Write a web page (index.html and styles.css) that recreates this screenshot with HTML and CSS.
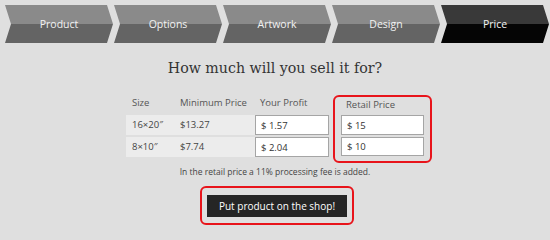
FILE: index.html
```html
<!DOCTYPE html>
<html lang="en">
<head>
  <meta charset="UTF-8">
  <title>Price</title>
  <link rel="stylesheet" href="styles.css">
</head>
<body>

  <div class="steps">
    <div class="step">Product</div>
    <div class="step">Options</div>
    <div class="step">Artwork</div>
    <div class="step">Design</div>
    <div class="step active">Price</div>
  </div>

  <h1>How much will you sell it for?</h1>

  <div class="pricing">
    <div class="table">
      <div class="head">Size</div>
      <div class="head">Minimum Price</div>
      <div class="head">Your Profit</div>

      <div class="cell size">16×20″</div>
      <div class="cell">$13.27</div>
      <div class="field"><input type="text" value="$ 1.57"></div>

      <div class="cell size">8×10″</div>
      <div class="cell">$7.74</div>
      <div class="field"><input type="text" value="$ 2.04"></div>
    </div>

    <div class="retail">
      <div class="head">Retail Price</div>
      <div class="field"><input type="text" value="$ 15"></div>
      <div class="field"><input type="text" value="$ 10"></div>
    </div>
  </div>

  <p class="note">In the retail price a 11% processing fee is added.</p>

  <div class="submit">
    <div class="outline">
      <button>Put product on the shop!</button>
    </div>
  </div>

</body>
</html>
```

FILE: styles.css
```css
body {
  margin: 0;
  background-color: #dfdfdf;
  color: #444;
  font-family: 'Open Sans', sans-serif;
}

.steps {
  display: flex;
  gap: 1px;
  padding: 5px 0 0 5px;
}

.step {
  flex: none;
  width: 108px;
  height: 38px;
  display: flex;
  align-items: center;
  justify-content: center;
  font-size: 10.5px;
  color: #f2f2f2;
  background: linear-gradient(#8a8a8a 50%, #646464 50%);
  clip-path: polygon(0 0, 102px 0, 108px 50%, 102px 100%, 0 100%, 6px 50%);
}

.step.active {
  background: linear-gradient(#393939 50%, #050505 50%);
}

h1 {
  margin: 15px 0 0;
  font: normal 14.2px/20px 'DejaVu Serif', serif;
  color: #333;
  text-align: center;
}

.pricing {
  display: flex;
  align-items: flex-start;
  margin: 15px 0 0 126px;
  font-size: 9.5px;
}

.table {
  display: grid;
  grid-template-columns: 49px 80px 74px;
  grid-auto-rows: 20px;
  row-gap: 2px;
}

.head {
  line-height: 20px;
  padding-left: 5px;
  color: #555;
}

.cell {
  line-height: 20px;
  padding-left: 5px;
  background-color: #ececec;
}

.cell.size,
.table .head:first-child {
  padding-left: 6px;
}

.field input {
  box-sizing: border-box;
  width: 100%;
  height: 100%;
  margin: 0;
  padding: 0 5px;
  border: 1px solid #a5a5a5;
  background: #fff;
  color: #333;
  font: 9.5px 'Open Sans', sans-serif;
}

.retail {
  display: grid;
  grid-template-columns: 83px;
  grid-template-rows: 16px 20px 19px;
  row-gap: 2px;
  margin: 2px 0 0 4px;
  padding: 0 6px 5px;
  border: 2px solid #e8141b;
  border-radius: 6px;
}

.retail .head {
  line-height: 16px;
}

.note {
  margin: 2px 0 0;
  font-size: 8.5px;
  line-height: 14px;
  text-align: center;
}

.submit {
  margin-top: 7px;
  padding-left: 4px;
  text-align: center;
}

.outline {
  display: inline-block;
  padding: 7px 5px 6px;
  border: 2px solid #e8141b;
  border-radius: 6px;
}

button {
  display: block;
  width: 140px;
  height: 22px;
  padding: 0;
  border: none;
  background-color: #252525;
  color: #fff;
  font: 10px 'Open Sans', sans-serif;
}
```
